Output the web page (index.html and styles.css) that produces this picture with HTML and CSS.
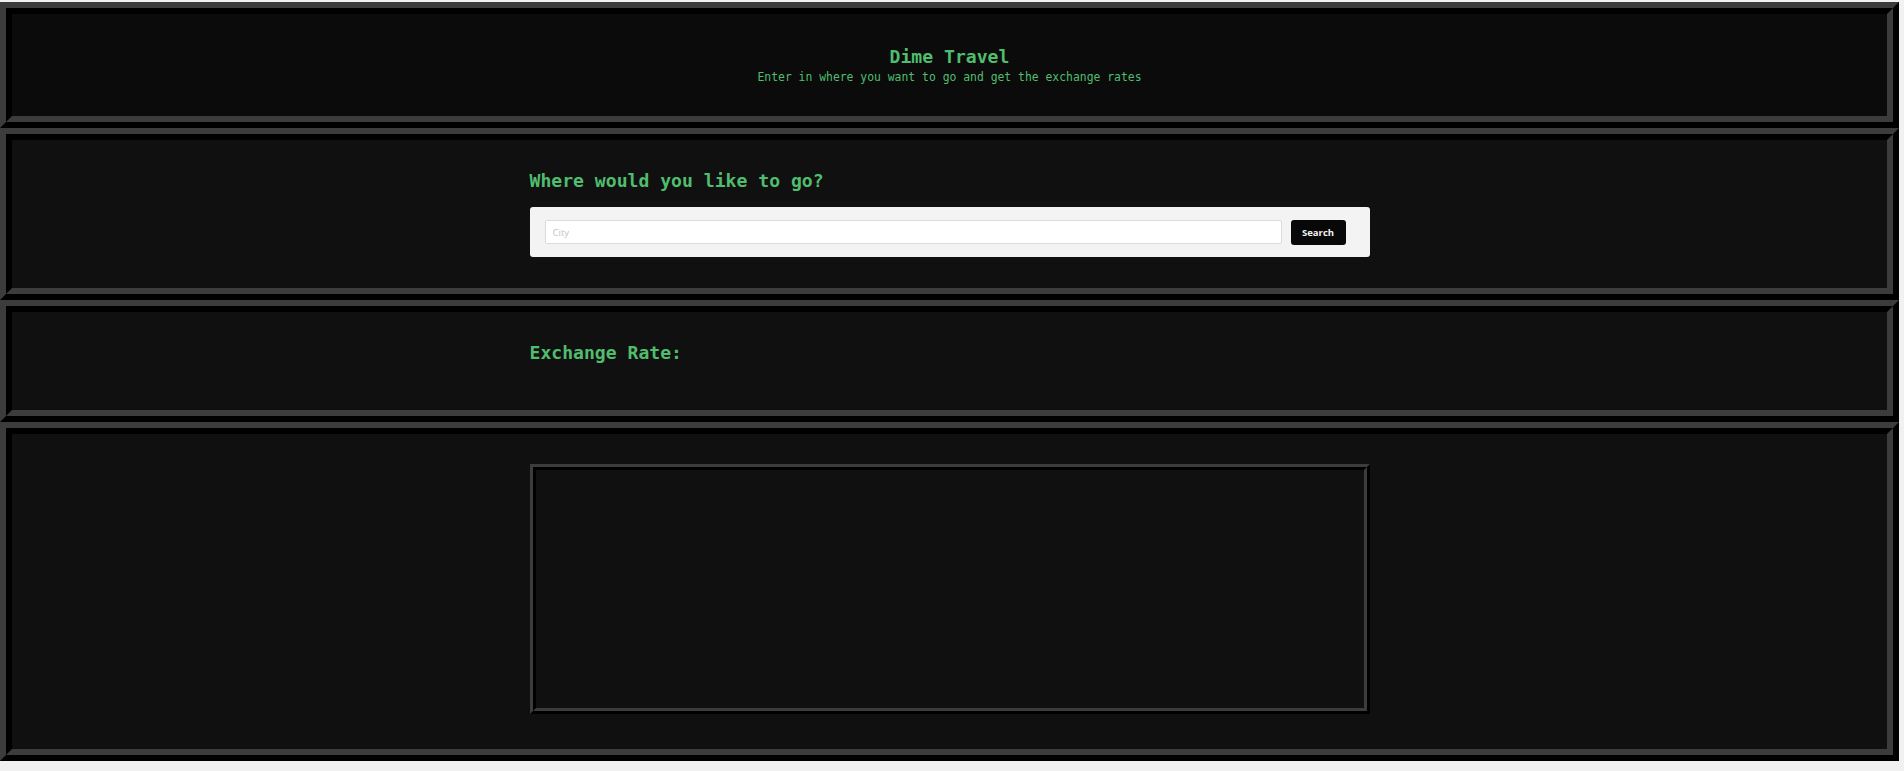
FILE: index.html
```html
<!DOCTYPE html>
<html lang="en">
<head>
<meta charset="utf-8">
<title>Dime Travel</title>
<link rel="stylesheet" href="styles.css">
</head>
<body>
  <header class="frame">
    <div class="frame-inner header-inner">
      <h1 class="title">Dime Travel</h1>
      <p class="subtitle">Enter in where you want to go and get the exchange rates</p>
    </div>
  </header>

  <section class="frame">
    <div class="frame-inner section-inner">
      <div class="container">
        <h2 class="heading">Where would you like to go?</h2>
        <form class="search-panel" onsubmit="return false;">
          <input class="city-input" type="text" placeholder="City">
          <button class="search-btn" type="submit">Search</button>
        </form>
      </div>
    </div>
  </section>

  <section class="frame">
    <div class="frame-inner section-inner">
      <div class="container">
        <h2 class="heading">Exchange Rate:</h2>
      </div>
    </div>
  </section>

  <section class="frame">
    <div class="frame-inner map-inner">
      <div class="container">
        <div class="result-box"><div class="result-box-inner"></div></div>
      </div>
    </div>
  </section>
</body>
</html>
```
FILE: styles.css
```css
* { box-sizing: border-box; }

html, body {
  margin: 0;
  padding: 0;
}

body {
  background: #f1f1f1;
  padding: 2px 5px 10px 0;
  font-family: "DejaVu Sans Mono", "Liberation Mono", monospace;
  color: #50bd6e;
}

.frame {
  display: block;
  border: 6px solid;
  border-color: #3c3c3c #000 #000 #3c3c3c;
}

.frame-inner {
  border: 6px solid;
  border-color: #000 #3c3c3c #3c3c3c #000;
  background: #101010;
}

.header-inner {
  background: #0b0b0b;
  padding: 31px 0;
  text-align: center;
}

.title {
  margin: 0;
  font-size: 18.1px;
  line-height: 24px;
  font-weight: bold;
}

.subtitle {
  margin: 0;
  font-size: 11.4px;
  line-height: 16px;
}

.section-inner {
  padding: 29px 0 31px;
}

.map-inner {
  padding: 30px 0 35px;
}

.container {
  width: 840px;
  margin: 0 auto;
}

.heading {
  margin: 0 0 14px;
  font-size: 18.1px;
  line-height: 24px;
  font-weight: bold;
}

.search-panel {
  display: flex;
  align-items: flex-start;
  gap: 9px;
  height: 50px;
  padding: 13px 24px 12px 15px;
  background: #f3f3f3;
  border-radius: 3px;
  margin: 0;
}

.city-input {
  flex: 1;
  height: 24px;
  margin: 0;
  padding: 0 7px;
  border: 1px solid #dcdcdc;
  border-radius: 2px;
  background: #fff;
  font-family: "Open Sans", "Liberation Sans", sans-serif;
  font-size: 9.5px;
  color: #333;
  outline: none;
}

.city-input::placeholder {
  color: #c4c4c4;
}

.search-btn {
  width: 55px;
  height: 25px;
  margin: 0;
  padding: 0;
  border: none;
  border-radius: 3px;
  background: #080808;
  color: #f4f4f4;
  font-family: "Open Sans", "Liberation Sans", sans-serif;
  font-weight: bold;
  font-size: 9.5px;
  cursor: pointer;
}

.result-box {
  height: 250px;
  border: 3px solid;
  border-color: #3c3c3c #000 #000 #3c3c3c;
}

.result-box-inner {
  height: 100%;
  border: 3px solid;
  border-color: #000 #3c3c3c #3c3c3c #000;
}
```
